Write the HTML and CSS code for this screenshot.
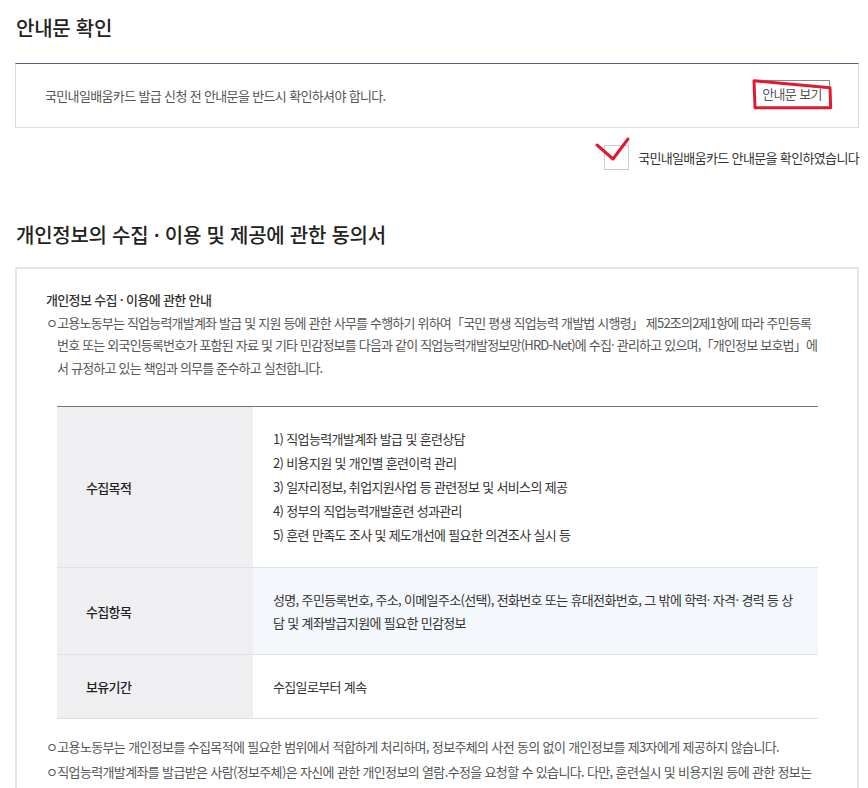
FILE: index.html
```html
<!DOCTYPE html>
<html lang="ko">
<head>
<meta charset="utf-8">
<title>안내문 확인</title>
<link rel="stylesheet" href="styles.css">
</head>
<body>
<div class="page">
  <h2 class="sec-title">안내문 확인</h2>
  <div class="notice">
    <p class="notice-text">국민내일배움카드 발급 신청 전 안내문을 반드시 확인하셔야 합니다.</p>
    <div class="btn-wrap">
      <button class="btn" type="button">안내문 보기</button>
      <svg class="mark-rect" width="88" height="38" viewBox="0 0 88 38"><polygon points="4,4.7 80,11.7 80.7,31.7 5,31.7" fill="none" stroke="#e3192f" stroke-width="3" stroke-linejoin="round"/></svg>
    </div>
  </div>
  <div class="check-row">
    <span class="chk-wrap">
      <span class="chk"></span>
      <svg class="mark-check" width="40" height="30" viewBox="0 0 40 30"><polyline points="3,10 19,24 34,4" fill="none" stroke="#e3192f" stroke-width="3" stroke-linecap="round" stroke-linejoin="round"/></svg>
    </span>
    <label class="chk-label">국민내일배움카드 안내문을 확인하였습니다</label>
  </div>

  <h2 class="sec-title sec-title2">개인정보의 수집 · 이용 및 제공에 관한 동의서</h2>
  <div class="agree">
    <p class="agree-title">개인정보 수집 · 이용에 관한 안내</p>
    <p class="bullet tight">ㅇ고용노동부는 직업능력개발계좌 발급 및 지원 등에 관한 사무를 수행하기 위하여「국민 평생 직업능력 개발법 시행령」 제52조의2제1항에 따라 주민등록<br>번호 또는 외국인등록번호가 포함된 자료 및 기타 민감정보를 다음과 같이 직업능력개발정보망(HRD-Net)에 수집· 관리하고 있으며,「개인정보 보호법」에<br>서 규정하고 있는 책임과 의무를 준수하고 실천합니다.</p>
    <table class="info-table">
      <tr>
        <th>수집목적</th>
        <td>
          <ul class="purpose">
            <li>1) 직업능력개발계좌 발급 및 훈련상담</li>
            <li>2) 비용지원 및 개인별 훈련이력 관리</li>
            <li>3) 일자리정보, 취업지원사업 등 관련정보 및 서비스의 제공</li>
            <li>4) 정부의 직업능력개발훈련 성과관리</li>
            <li>5) 훈련 만족도 조사 및 제도개선에 필요한 의견조사 실시 등</li>
          </ul>
        </td>
      </tr>
      <tr class="row-blue">
        <th>수집항목</th>
        <td>성명, 주민등록번호, 주소, 이메일주소(선택), 전화번호 또는 휴대전화번호, 그 밖에 학력· 자격· 경력 등 상<br>담 및 계좌발급지원에 필요한 민감정보</td>
      </tr>
      <tr>
        <th>보유기간</th>
        <td>수집일로부터 계속</td>
      </tr>
    </table>
    <p class="bullet after">ㅇ고용노동부는 개인정보를 수집목적에 필요한 범위에서 적합하게 처리하며, 정보주체의 사전 동의 없이 개인정보를 제3자에게 제공하지 않습니다.</p>
    <p class="bullet">ㅇ직업능력개발계좌를 발급받은 사람(정보주체)은 자신에 관한 개인정보의 열람.수정을 요청할 수 있습니다. 다만, 훈련실시 및 비용지원 등에 관한 정보는</p>
  </div>
</div>
</body>
</html>
```

FILE: styles.css
```css
* { box-sizing: border-box; }
html, body { margin: 0; padding: 0; background: #fff; }
body {
  font-family: "Noto Sans CJK KR", "Noto Sans", sans-serif;
  font-size: 13px;
  letter-spacing: -0.65px;
  color: #555;
}
.page {
  width: 844px;
  margin-left: 15px;
}
.sec-title {
  margin: 0;
  padding-top: 14px;
  font-size: 20px;
  line-height: 28px;
  font-weight: 500;
  color: #222;
  letter-spacing: -0.25px;
  padding-left: 1px;
  margin-bottom: 21px;
}
.sec-title2 {
  padding-top: 0;
  margin-top: 51px;
  margin-bottom: 18px;
}
.notice {
  display: flex;
  align-items: center;
  justify-content: space-between;
  height: 65px;
  border: 1px solid #dddddd;
  border-top: 1px solid #5b6178;
  padding: 0 28px 0 29px;
}
.notice-text {
  margin: 0;
  color: #555;
  line-height: 20px;
}
.btn-wrap {
  position: relative;
  margin-bottom: 4px;
}
.btn {
  display: block;
  width: 76px;
  height: 28px;
  border: 1px solid #8a8a8a;
  background: #fff;
  font-family: inherit;
  font-size: 13px;
  letter-spacing: -0.65px;
  color: #555;
  padding: 0;
}
.mark-rect {
  position: absolute;
  left: -4px;
  top: -4px;
}
.check-row {
  display: flex;
  justify-content: flex-end;
  align-items: center;
  gap: 9px;
  margin-top: 17px;
}
.chk-wrap {
  position: relative;
  width: 25px;
  height: 25px;
}
.chk {
  display: block;
  width: 25px;
  height: 25px;
  border: 1px solid #cccccc;
  background: #fff;
}
.mark-check {
  position: absolute;
  left: -10px;
  top: -10px;
}
.chk-label {
  color: #333;
  line-height: 20px;
  white-space: nowrap;
}
.agree {
  border: 2px solid #e4e4ea;
  padding: 20px 39px 20px 40px;
}
.agree-title {
  margin: 0 0 0 -11px;
  color: #333;
  font-weight: 500;
  line-height: 22.5px;
}
.bullet {
  margin: 0;
  line-height: 22.5px;
  text-indent: -11px;
  color: #555;
  white-space: nowrap;
}
.bullet.tight {
  letter-spacing: -0.8px;
}
.bullet.after {
  margin-top: 17px;
}
.bullet + .bullet {
  margin-top: 2px;
}
.info-table {
  width: 761px;
  margin-top: 27px;
  border-collapse: collapse;
  border-top: 1px solid #777777;
  border-bottom: 1px solid #dddddd;
}
.info-table th {
  width: 196px;
  background: #efeff2;
  text-align: left;
  padding: 0 0 0 29px;
  font-weight: 500;
  color: #222;
  border-bottom: 1px solid #e1e1e4;
}
.info-table td {
  padding: 20px 20px;
  line-height: 23px;
  color: #333;
  border-bottom: 1px solid #e1e1e4;
}
.info-table tr:last-child th,
.info-table tr:last-child td {
  border-bottom: 0;
}
.row-blue td {
  background: #f4f7fb;
}
.purpose {
  list-style: none;
  margin: 0;
  padding: 0;
}
.purpose li {
  line-height: 24px;
}
```
